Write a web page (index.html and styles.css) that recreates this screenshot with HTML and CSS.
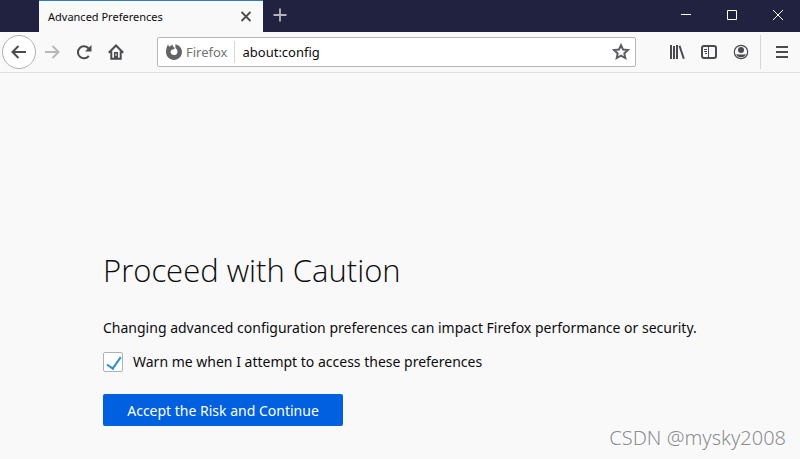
FILE: index.html
```html
<!DOCTYPE html>
<html lang="en">
  <head>
    <meta charset="utf-8">
    <title>Advanced Preferences</title>
    <link rel="stylesheet" href="styles.css">
  </head>
  <body>
    <header class="titlebar">
      <div class="tab">
        <span class="tab-label">Advanced Preferences</span>
        <button class="tab-close" type="button" aria-label="Close tab">
          <svg width="16" height="16" viewBox="0 0 16 16"><path d="M3.500 3l9 9M12.500 3l-9 9" stroke="#4a4a4f" stroke-width="1.800" /></svg>
        </button>
      </div>
      <button class="new-tab" type="button" aria-label="New tab">
        <svg width="16" height="16" viewBox="0 0 16 16"><path d="M8 .5v13M1.500 7h13" stroke="#b5b5c0" stroke-width="1.800" /></svg>
      </button>
      <div class="window-controls">
        <button type="button" aria-label="Minimize">
          <svg width="10" height="10" viewBox="0 0 10 10"><path d="M0 4.500h10" stroke="#fff" /></svg>
        </button>
        <button type="button" aria-label="Maximize">
          <svg width="10" height="10" viewBox="0 0 10 10"><path d="M.5.5h9v9h-9z" stroke="#fff" fill="none" /></svg>
        </button>
        <button type="button" aria-label="Close">
          <svg width="10" height="10" viewBox="0 0 10 10"><path d="M0 0l10 10M10 0L0 10" stroke="#fff" /></svg>
        </button>
      </div>
    </header>

    <nav class="toolbar">
      <button class="back" type="button" aria-label="Back">
        <svg width="16" height="16" viewBox="0 0 16 16"><path d="M15 8H2M7.500 2L1.500 8l6 6" /></svg>
      </button>
      <button class="tool disabled" type="button" aria-label="Forward" disabled>
        <svg width="16" height="16" viewBox="0 0 16 16"><path d="M1 8h13M8.500 2l6 6-6 6" /></svg>
      </button>
      <button class="tool" type="button" aria-label="Reload">
        <svg width="16" height="16" viewBox="0 0 16 16"><path d="M12.800 11.800A6 6 0 1 1 12.600 4.500" /><path class="solid" d="M15.500 1v6.500H9z" /></svg>
      </button>
      <button class="tool" type="button" aria-label="Home">
        <svg width="16" height="16" viewBox="0 0 16 16"><path d="M.8 8.700L8 1.500l7.200 7.200M3.300 7.500v7.300h9.400V7.500" /><path class="solid" d="M6 8h4v6H6z" /><path d="M8 9.500v2.500" stroke="#f9f9fa" stroke-width="1" /></svg>
      </button>

      <div class="urlbar">
        <div class="identity">
          <svg width="16" height="16" viewBox="0 0 16 16"><path class="solid" d="M2 .6l1.400 2.200L6.600.6c0 1.300.4 2 1.200 2.700l1 .8c-.2 1-.9 1.300-1.900 1.400-1.500.3-2.500 1.400-2.300 2.800.2 1.700 1.600 2.800 3.400 2.800 2.100 0 3.500-1.500 3.500-3.400 0-1.700-.9-2.800-2-3.600L9.300.3c3.900.7 6.700 3.900 6.700 7.800C16 12.500 12.500 16 8 16S0 12.500 0 8.100C0 5.400.6 3 2 .6z" /></svg>
          <span>Firefox</span>
        </div>
        <input class="address" type="text" value="about:config" aria-label="Address">
        <button class="star" type="button" aria-label="Bookmark this page">
          <svg width="18" height="18" viewBox="0 0 18 18"><path d="M9 2.200l2 4.300 4.900.6-3.600 3.300 1 4.700L9 12.700l-4.300 2.400 1-4.700-3.600-3.300 4.900-.6z" /></svg>
        </button>
      </div>

      <button class="tool" type="button" aria-label="Library">
        <svg width="16" height="16" viewBox="0 0 16 16"><path d="M2 1v14M5 2v13M8 1v14M10.500 1.700l4.300 13" /></svg>
      </button>
      <button class="tool" type="button" aria-label="Sidebars">
        <svg width="16" height="16" viewBox="0 0 16 16"><rect x="1" y="2" width="14" height="12" rx="2" /><path d="M7.500 2v12" stroke-width="1" /><path d="M3 5.500h3M3 7.500h3M4 9.500h2" stroke-width="1" /></svg>
      </button>
      <button class="tool" type="button" aria-label="Account">
        <svg width="16" height="16" viewBox="0 0 16 16"><circle cx="8" cy="8" r="6.700" stroke-width="1.200" /><circle class="solid" cx="8" cy="6" r="3" /><path class="solid" d="M3.200 9.700c1.300.6 2.600.9 4.800.9s3.500-.3 4.800-.9c-.4 2.300-2.200 3.600-4.800 3.600s-4.400-1.300-4.800-3.600z" /></svg>
      </button>
      <div class="separator"></div>
      <button class="tool" type="button" aria-label="Open menu">
        <svg width="16" height="16" viewBox="0 0 16 16"><path d="M2 3h12M2 8h12M2 13h12" /></svg>
      </button>
    </nav>

    <main class="warning">
      <h1>Proceed with Caution</h1>
      <p>Changing advanced configuration preferences can impact Firefox performance or security.</p>
      <label class="check">
        <input type="checkbox" checked>
        <span>Warn me when I attempt to access these preferences</span>
      </label>
      <button class="accept" type="button">Accept the Risk and Continue</button>
    </main>

    <div class="watermark">CSDN @mysky2008</div>
  </body>
</html>
```
FILE: styles.css
```css
* {
  box-sizing: border-box;
  margin: 0;
  padding: 0;
}

body {
  min-height: 100vh;
  background: #f9f9fa;
  color: #0c0c0d;
  font-family: "Noto Sans", "Open Sans", sans-serif;
  font-size: 14px;
}

button {
  border: none;
  background: none;
  font-family: inherit;
}

svg {
  display: block;
}

/* Title bar */
.titlebar {
  display: flex;
  height: 32px;
  padding-left: 39px;
  background: #20223f;
}

.tab {
  display: flex;
  align-items: center;
  justify-content: space-between;
  width: 224px;
  padding: 0 9px;
  border-top: 1px solid #2a7fc4;
  background: #f9f9fa;
  font-size: 11px;
}

.new-tab {
  padding: 0 9px;
}

.window-controls {
  display: flex;
  margin-left: auto;
}

.window-controls button {
  display: flex;
  align-items: center;
  justify-content: center;
  width: 46px;
  height: 30px;
  padding-left: 2px;
}

/* Toolbar */
.toolbar {
  display: flex;
  align-items: center;
  height: 41px;
  padding: 0 2px;
  border-bottom: 1px solid #e0e0e1;
}

.toolbar svg {
  fill: none;
  stroke: #4a4a4f;
  stroke-width: 2;
}

.toolbar .solid {
  fill: #4a4a4f;
  stroke: none;
}

.back,
.tool {
  display: flex;
  flex: none;
  align-items: center;
  justify-content: center;
  width: 32px;
  height: 32px;
}

.back {
  width: 34px;
  height: 34px;
  border: 1px solid #b1b1b3;
  border-radius: 50%;
  background: #fff;
}

.toolbar .disabled svg {
  stroke: #b8b8ba;
}

.urlbar {
  display: flex;
  flex: 1;
  align-items: center;
  min-width: 0;
  height: 30px;
  margin: 0 25px;
  padding: 0 5px 0 8px;
  border: 1px solid #b8b8ba;
  border-radius: 2px;
  background: #fff;
}

.identity {
  display: flex;
  align-items: center;
  gap: 4px;
  height: 22px;
  padding-right: 6px;
  border-right: 1px solid #d7d7db;
  color: #737373;
  font-size: 13px;
}

.toolbar .identity .solid {
  fill: #636366;
}

.toolbar .star svg {
  stroke: #5e5e62;
}

.address {
  flex: 1;
  min-width: 0;
  padding-left: 8px;
  border: none;
  outline: none;
  background: none;
  color: #0c0c0d;
  font-family: inherit;
  font-size: 13px;
}

.separator {
  width: 1px;
  height: 34px;
  margin: 0 5px 0 3px;
  background: #d7d7db;
}

/* Warning page */
.warning {
  padding: 173px 24px 32px 103px;
}

.warning h1 {
  margin-bottom: 24px;
  font-family: "Open Sans", "Noto Sans", sans-serif;
  font-size: 31px;
  font-weight: 300;
  line-height: 48px;
}

.warning p {
  margin-bottom: 14px;
  line-height: 20px;
}

.check {
  display: flex;
  align-items: center;
  gap: 10px;
  width: fit-content;
  margin-bottom: 22px;
  line-height: 20px;
}

.check input {
  width: 20px;
  height: 20px;
  border: 1px solid #b1b1b3;
  border-radius: 2px;
  background: #fff;
  appearance: none;
}

.check input:checked::before {
  content: "";
  display: block;
  width: 6px;
  height: 13px;
  margin: 1px 0 0 6px;
  border: solid #2c8fcb;
  border-width: 0 2px 2px 0;
  transform: rotate(35deg);
}

.accept {
  width: 240px;
  height: 32px;
  border-radius: 2px;
  background: #0060df;
  color: #fff;
  font-size: 14px;
}

.watermark {
  position: absolute;
  right: 14px;
  bottom: 8px;
  color: #8c8c90;
  font-size: 20px;
  font-weight: 300;
  line-height: 26px;
  text-shadow: 1px 1px 0 #fff;
}
```
